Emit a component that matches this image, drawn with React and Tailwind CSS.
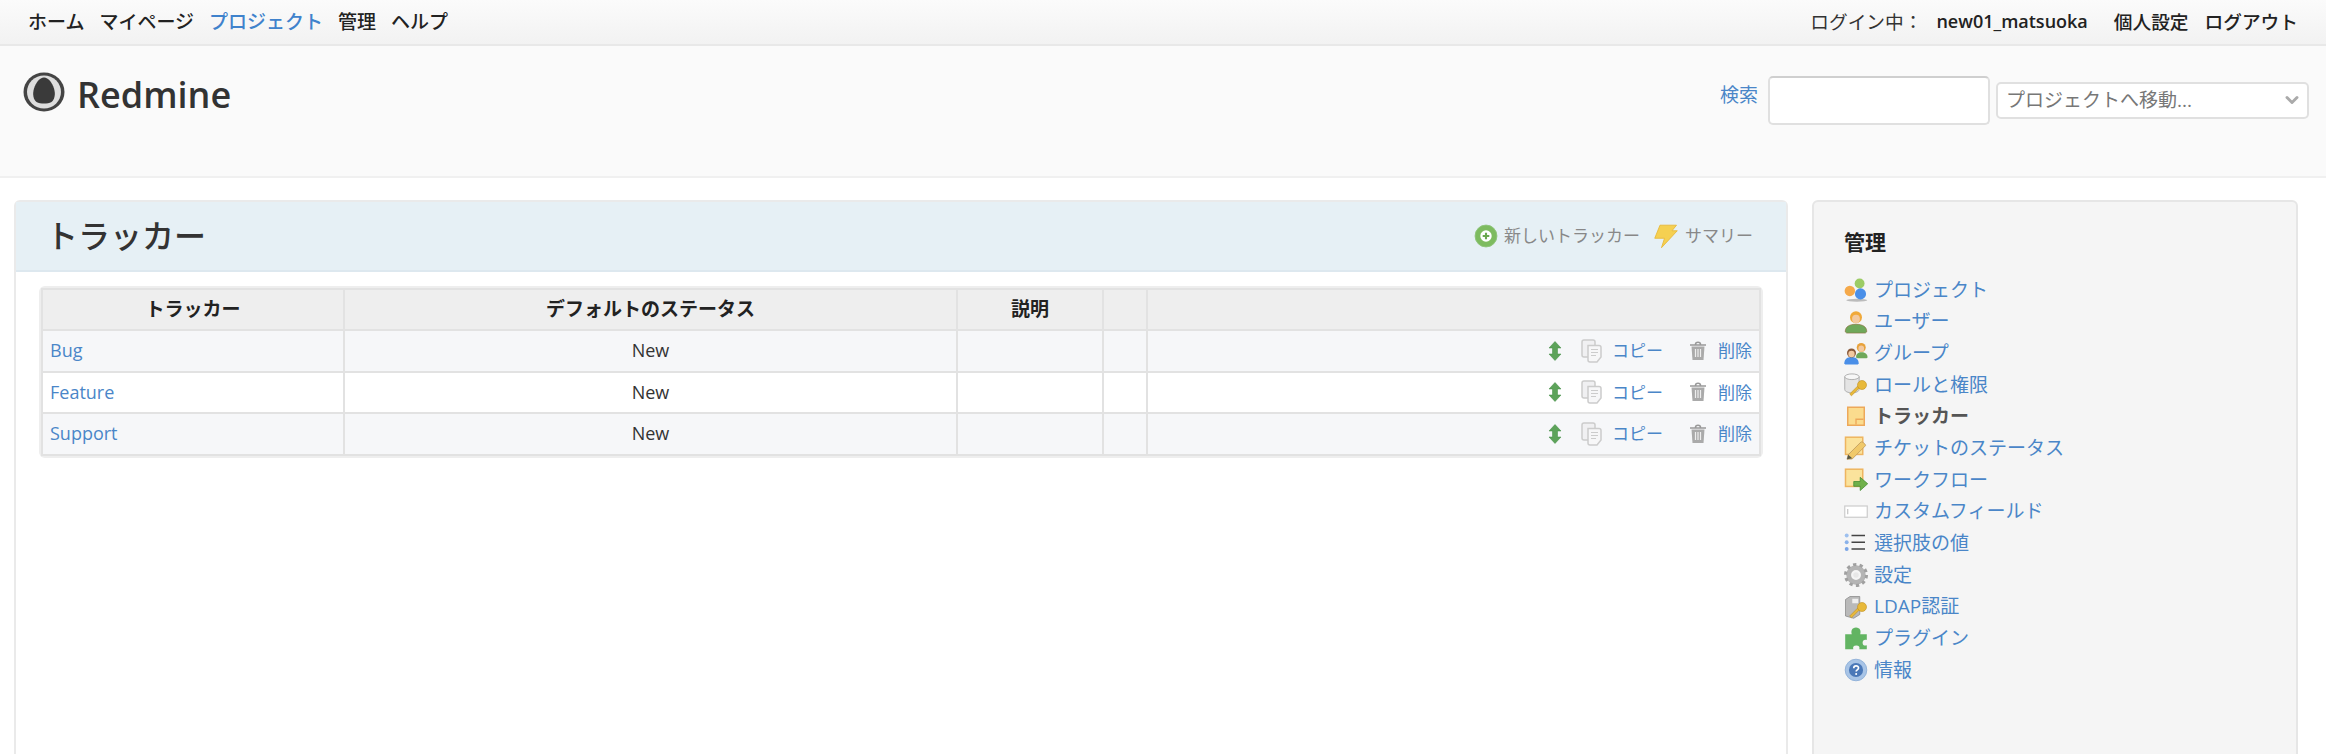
import { ChevronDown } from "lucide-react";

const jp = "font-['Open_Sans','Noto_Sans_CJK_JP',sans-serif]";

const Ico = ({ children, className = "" }) => (
  <svg viewBox="0 0 16 16" className={`w-6 h-6 shrink-0 ${className}`}>
    {children}
  </svg>
);

const ProjectsIcon = () => (
  <Ico>
    <ellipse cx="8.500" cy="14.800" rx="7" ry="1" fill="#bbb" />
    <circle cx="10.400" cy="3.700" r="3.300" fill="#9ccc65" />
    <circle cx="3.900" cy="8.600" r="3.500" fill="#f5a94a" />
    <circle cx="11" cy="10.600" r="3.700" fill="#4a8fe8" />
  </Ico>
);

const UserIcon = () => (
  <Ico>
    <path d="M.8 14.500c0-3.500 3-5 7.200-5s7.200 1.500 7.200 5l-1 .9H1.800z" fill="#6fa85a" stroke="#8a6a3a" strokeWidth=".4" />
    <circle cx="8" cy="4.800" r="4" fill="#f0a93a" />
    <ellipse cx="8" cy="6" rx="2.600" ry="2.800" fill="#f3c9a0" />
  </Ico>
);

const GroupIcon = () => (
  <Ico>
    <path d="M8 11c0-2.500 1.500-3.500 3.700-3.500s4 1 4 3.500l-.6.500H9z" fill="#6fa85a" />
    <circle cx="11.500" cy="4.300" r="3" fill="#e8a23a" />
    <ellipse cx="11.500" cy="5.100" rx="1.900" ry="2.100" fill="#f3c9a0" />
    <path d="M.2 15c0-3 2.200-4.300 4.800-4.300S9.800 12 9.800 15l-.6.700H.8z" fill="#4a8fe8" />
    <circle cx="5" cy="8" r="3" fill="#8a5a3a" />
    <ellipse cx="5" cy="8.700" rx="2.100" ry="2.200" fill="#f3c9a0" />
  </Ico>
);

const KeyShape = () => (
  <g fill="#e8b93a" stroke="#c08f20" strokeWidth=".4">
    <path d="M5 15.200l-1.200-1.200 5.200-5.200 1.200 1.200z" />
    <circle cx="12" cy="8" r="3" />
  </g>
);

const RoleIcon = () => (
  <Ico>
    <path d="M.5 2.500v8.500c0 1.300 2.200 2.200 4.800 2.200s4.800-.9 4.800-2.200V2.500z" fill="#e4e4e4" stroke="#aaa" strokeWidth=".6" />
    <ellipse cx="5.300" cy="2.500" rx="4.800" ry="1.900" fill="#f7f7f7" stroke="#aaa" strokeWidth=".6" />
    <KeyShape />
  </Ico>
);

const TrackerIcon = () => (
  <Ico>
    <rect x="2.500" y="1.500" width="11" height="12" fill="#fbdc8e" stroke="#eda85a" strokeWidth="1" />
    <path d="M8 13v-3.500h5" fill="none" stroke="#eda85a" strokeWidth=".9" />
  </Ico>
);

const StatusIcon = () => (
  <Ico>
    <rect x="1" y=".8" width="11.500" height="11.500" fill="#fbe39c" stroke="#eeb560" strokeWidth="1" />
    <path d="M2 15.500l.8-3 8.500-8.500c.7-.6 3.500 1.600 3 2.500l-8.800 8.800z" fill="#f0c96a" stroke="#b8935a" strokeWidth=".5" />
    <path d="M2 15.500l.8-3 2.700 2.300z" fill="#554" />
  </Ico>
);

const WorkflowIcon = () => (
  <Ico>
    <rect x="1" y=".8" width="11.500" height="11.500" fill="#fbe39c" stroke="#eeb560" strokeWidth="1" />
    <path d="M6.500 9h4.300V6.200l5 4.300-5 4.500v-2.800H6.500z" fill="#6fb04a" stroke="#3f8a30" strokeWidth=".5" />
  </Ico>
);

const FieldIcon = () => (
  <Ico>
    <rect x=".5" y="4" width="15" height="7.500" fill="#fff" stroke="#ccc" strokeWidth=".8" />
    <path d="M2.500 6v3.500" stroke="#bbb" strokeWidth=".7" />
  </Ico>
);

const ListIcon = () => (
  <Ico>
    <circle cx="1.800" cy="3" r="1.300" fill="#9dc0ef" />
    <circle cx="1.800" cy="7.500" r="1.300" fill="#8ab2ea" />
    <circle cx="1.800" cy="12" r="1.300" fill="#7aa5e6" />
    <path d="M5 3h9M5 7.500h9M5 12h9" stroke="#444" strokeWidth="1" />
  </Ico>
);

const GearIcon = () => (
  <Ico>
    <circle cx="8" cy="8" r="4.900" fill="none" stroke="#b4b4b4" strokeWidth="3.200" />
    <circle cx="8" cy="8" r="7" fill="none" stroke="#a0a0a0" strokeWidth="2" strokeDasharray="2.200 2.200" />
    <circle cx="8" cy="8" r="1.800" fill="#e8e8e8" />
  </Ico>
);

const LdapIcon = () => (
  <Ico>
    <path d="M1 3l3-2h6.500v12l-4 2.500L1 14z" fill="#b9b9b9" stroke="#888" strokeWidth=".5" />
    <path d="M5.500 2.500h4v3h-4z" fill="#eee" />
    <KeyShape />
  </Ico>
);

const PluginIcon = () => (
  <Ico>
    <path d="M.8 5.500h4.400c-.7-2 0-4.500 2.800-4.500s3.500 2.500 2.800 4.500h4.400v3.800c-1.600-.5-2.800.2-2.800 1.800s1.200 2.300 2.800 1.800v2.600h-5c.5-1.600-.2-2.500-2-2.500s-2.500.9-2 2.500H.8z" fill="#62b462" />
  </Ico>
);

const InfoIcon = () => (
  <Ico>
    <circle cx="8" cy="8" r="7.200" fill="#a8c4e6" stroke="#8fb0d8" strokeWidth=".6" />
    <circle cx="8" cy="8" r="4.700" fill="#4a78b8" />
    <path d="M6.500 6.800c0-2 3.200-2 3.200-.1 0 1.200-1.600 1.300-1.600 2.300" fill="none" stroke="#fff" strokeWidth="1.100" />
    <circle cx="8.100" cy="10.700" r=".7" fill="#fff" />
  </Ico>
);

const AddIcon = () => (
  <Ico>
    <circle cx="8" cy="8" r="7.300" fill="#7dbb5f" stroke="#8fc47a" strokeWidth=".6" />
    <circle cx="8" cy="8" r="3.800" fill="#fff" />
    <path d="M8 5.800v4.400M5.800 8h4.400" stroke="#6aa84f" strokeWidth="1.400" />
  </Ico>
);

const BoltIcon = () => (
  <Ico>
    <path d="M4 .8h11l-3 3.700h3.500L5 15.800l2-6.300H.5z" fill="#f5d051" stroke="#e8b93a" strokeWidth=".6" />
  </Ico>
);

const SortIcon = () => (
  <svg viewBox="0 0 14 20" className="w-[14px] h-5 shrink-0">
    <path d="M7 .5L13 7H9.500v6H13L7 19.500 1 13h3.500V7H1z" fill="#5da35a" stroke="#3f8a40" strokeWidth=".5" />
  </svg>
);

const CopyIcon = () => (
  <svg viewBox="0 0 22 24" className="w-[22px] h-6 shrink-0">
    <rect x="1" y="1" width="13" height="17" rx="2" fill="#f0f0f2" stroke="#ccc" strokeWidth="1.500" />
    <path d="M7 6.500h11a2 2 0 0 1 2 2V18l-4 5H9a2 2 0 0 1-2-2z" fill="#f7f7f8" stroke="#ccc" strokeWidth="1.500" />
    <path d="M10 10.500h7M10 13.500h7M10 16.500h5" stroke="#ccc" strokeWidth="1.200" />
  </svg>
);

const TrashIcon = () => (
  <svg viewBox="0 0 18 20" className="w-[18px] h-5 shrink-0">
    <path d="M1 4h16M6.500 3.500c0-3 5-3 5 0" fill="none" stroke="#999" strokeWidth="1.600" />
    <path d="M2.500 5.500h13l-1 13.500h-11z" fill="#aaa" />
    <path d="M6.500 8v8M9 8v8M11.500 8v8" stroke="#eee" strokeWidth="1.200" />
  </svg>
);

const LogoMark = () => (
  <svg viewBox="0 0 42 40" className="w-[42px] h-10 shrink-0">
    <ellipse cx="21" cy="20" rx="20.500" ry="19.500" fill="#444" />
    <ellipse cx="21" cy="20" rx="17" ry="16.500" fill="#dedede" />
    <path d="M21 5.500c4.500 0 8 5 10 11 1.800 6 .5 11-2.500 13.500-4 2-11 2-15 0-3-2.500-4.300-7.500-2.500-13.500 2-6 5.500-11 10-11z" fill="#3a3a3a" />
  </svg>
);

const adminMenu = [
  ["プロジェクト", ProjectsIcon],
  ["ユーザー", UserIcon],
  ["グループ", GroupIcon],
  ["ロールと権限", RoleIcon],
  ["トラッカー", TrackerIcon, true],
  ["チケットのステータス", StatusIcon],
  ["ワークフロー", WorkflowIcon],
  ["カスタムフィールド", FieldIcon],
  ["選択肢の値", ListIcon],
  ["設定", GearIcon],
  ["LDAP認証", LdapIcon],
  ["プラグイン", PluginIcon],
  ["情報", InfoIcon],
];

const trackers = ["Bug", "Feature", "Support"];

const thClass = "border-2 border-[#e2e2e2] bg-[#eeeeee] text-[19px] font-semibold text-[#222] text-center";
const tdClass = "border-2 border-[#e2e2e2]";

const TopMenu = () => (
  <div className="h-[46px] flex items-center justify-between pl-[28px] pr-[28px] bg-gradient-to-b from-[#fbfbfb] to-[#f2f2f2] border-b-2 border-[#e8e8e8] text-[19px] font-medium text-[#222]">
    <div className="flex items-center gap-[15px]">
      <a>ホーム</a>
      <a>マイページ</a>
      <a className="text-[#3f82cc]">プロジェクト</a>
      <a>管理</a>
      <a>ヘルプ</a>
    </div>
    <div className="flex items-center text-[18.7px]">
      <span className="font-normal text-[#333] mr-[14px]">ログイン中：</span>
      <a className="text-[18px] font-semibold mr-[26px]">new01_matsuoka</a>
      <a className="mr-4">個人設定</a>
      <a>ログアウト</a>
    </div>
  </div>
);

const Header = () => (
  <div className="h-[132px] bg-[#fafafa] border-b-2 border-[#f0f0f0] flex justify-between pl-[23px] pr-[17px]">
    <div className="flex items-start gap-[12px] pt-[26px]">
      <LogoMark />
      <h1 className="text-[36px] leading-[40px] mt-[3px] font-semibold text-[#333]">Redmine</h1>
    </div>
    <div className="flex items-start pt-[30px]">
      <a className="text-[19px] text-[#4a86c8] leading-[36px] mt-[1px] mr-[10px]">検索</a>
      <input className="w-[222px] h-[49px] rounded-[5px] bg-white border-2 border-[#e0e0e0] border-t-[#cfcfcf] mr-[6px]" />
      <div className="relative mt-[6px]">
        <select className="appearance-none w-[313px] h-[37px] rounded-[5px] bg-white border-2 border-[#e0e0e0] pl-[8px] text-[19px] text-[#777]">
          <option>プロジェクトへ移動...</option>
        </select>
        <ChevronDown className="absolute right-[7px] top-[8px] w-5 h-5 text-[#aaa]" strokeWidth={3.5} />
      </div>
    </div>
  </div>
);

const TrackerRow = ({ name, odd }) => (
  <tr className={`h-[41.5px] ${odd ? "bg-[#f6f7f9]" : "bg-white"}`}>
    <td className={`${tdClass} pl-[7px] text-[18px] text-[#4a86c8]`}>
      <a>{name}</a>
    </td>
    <td className={`${tdClass} text-center text-[18px] text-[#333]`}>New</td>
    <td className={tdClass}></td>
    <td className={tdClass}></td>
    <td className={`${tdClass} pr-[7px]`}>
      <div className="flex items-center justify-end text-[17px] text-[#4a86c8]">
        <SortIcon />
        <span className="ml-[19px]"><CopyIcon /></span>
        <a className="ml-[9px]">コピー</a>
        <span className="ml-[26px]"><TrashIcon /></span>
        <a className="ml-[11px]">削除</a>
      </div>
    </td>
  </tr>
);

const Content = () => (
  <div className="flex-1 border-2 border-[#eaeaea] rounded-t-[6px] bg-white">
    <div className="h-[70px] bg-[#e6f0f5] border-b-2 border-[#dde8ef] flex items-center justify-between pl-[30px] pr-[33px]">
      <h2 className="text-[32px] font-medium text-[#333]">トラッカー</h2>
      <div className="flex items-center text-[17px] text-[#888]">
        <AddIcon />
        <a className="ml-[6px]">新しいトラッカー</a>
        <span className="ml-[14px]"><BoltIcon /></span>
        <a className="ml-[7px]">サマリー</a>
      </div>
    </div>
    <div className="pt-[16px] pl-[25px]">
      <table className="w-[1720px] table-fixed border-collapse shadow-[0_0_0_2px_#eeeeee] rounded-[4px]">
        <colgroup>
          <col className="w-[302px]" />
          <col className="w-[613px]" />
          <col className="w-[146px]" />
          <col className="w-[44px]" />
          <col />
        </colgroup>
        <thead>
          <tr className="h-[41px]">
            <th className={thClass}>トラッカー</th>
            <th className={thClass}>デフォルトのステータス</th>
            <th className={thClass}>説明</th>
            <th className={thClass}></th>
            <th className={thClass}></th>
          </tr>
        </thead>
        <tbody>
          {trackers.map((t, i) => (
            <TrackerRow key={t} name={t} odd={i % 2 === 0} />
          ))}
        </tbody>
      </table>
    </div>
  </div>
);

const Sidebar = () => (
  <div className="w-[486px] border-2 border-[#e6e6e6] rounded-t-[6px] bg-[#f5f5f5] pl-[30px] pt-[24px]">
    <h3 className="text-[21px] leading-[32px] font-semibold text-[#222] mb-[16px]">管理</h3>
    <ul>
      {adminMenu.map(([label, Icon, selected]) => (
        <li key={label} className="h-[31.7px] flex items-center gap-[6px] text-[19px]">
          <Icon />
          <a className={selected ? "font-semibold text-[#555]" : "text-[#4a86c8]"}>{label}</a>
        </li>
      ))}
    </ul>
  </div>
);

export default function App() {
  return (
    <div className={`h-[754px] overflow-hidden bg-white ${jp}`}>
      <TopMenu />
      <Header />
      <div className="h-[576px] flex gap-[24px] pl-[14px] pr-[28px] pt-[22px] [&>div]:min-h-[600px]">
        <Content />
        <Sidebar />
      </div>
    </div>
  );
}
